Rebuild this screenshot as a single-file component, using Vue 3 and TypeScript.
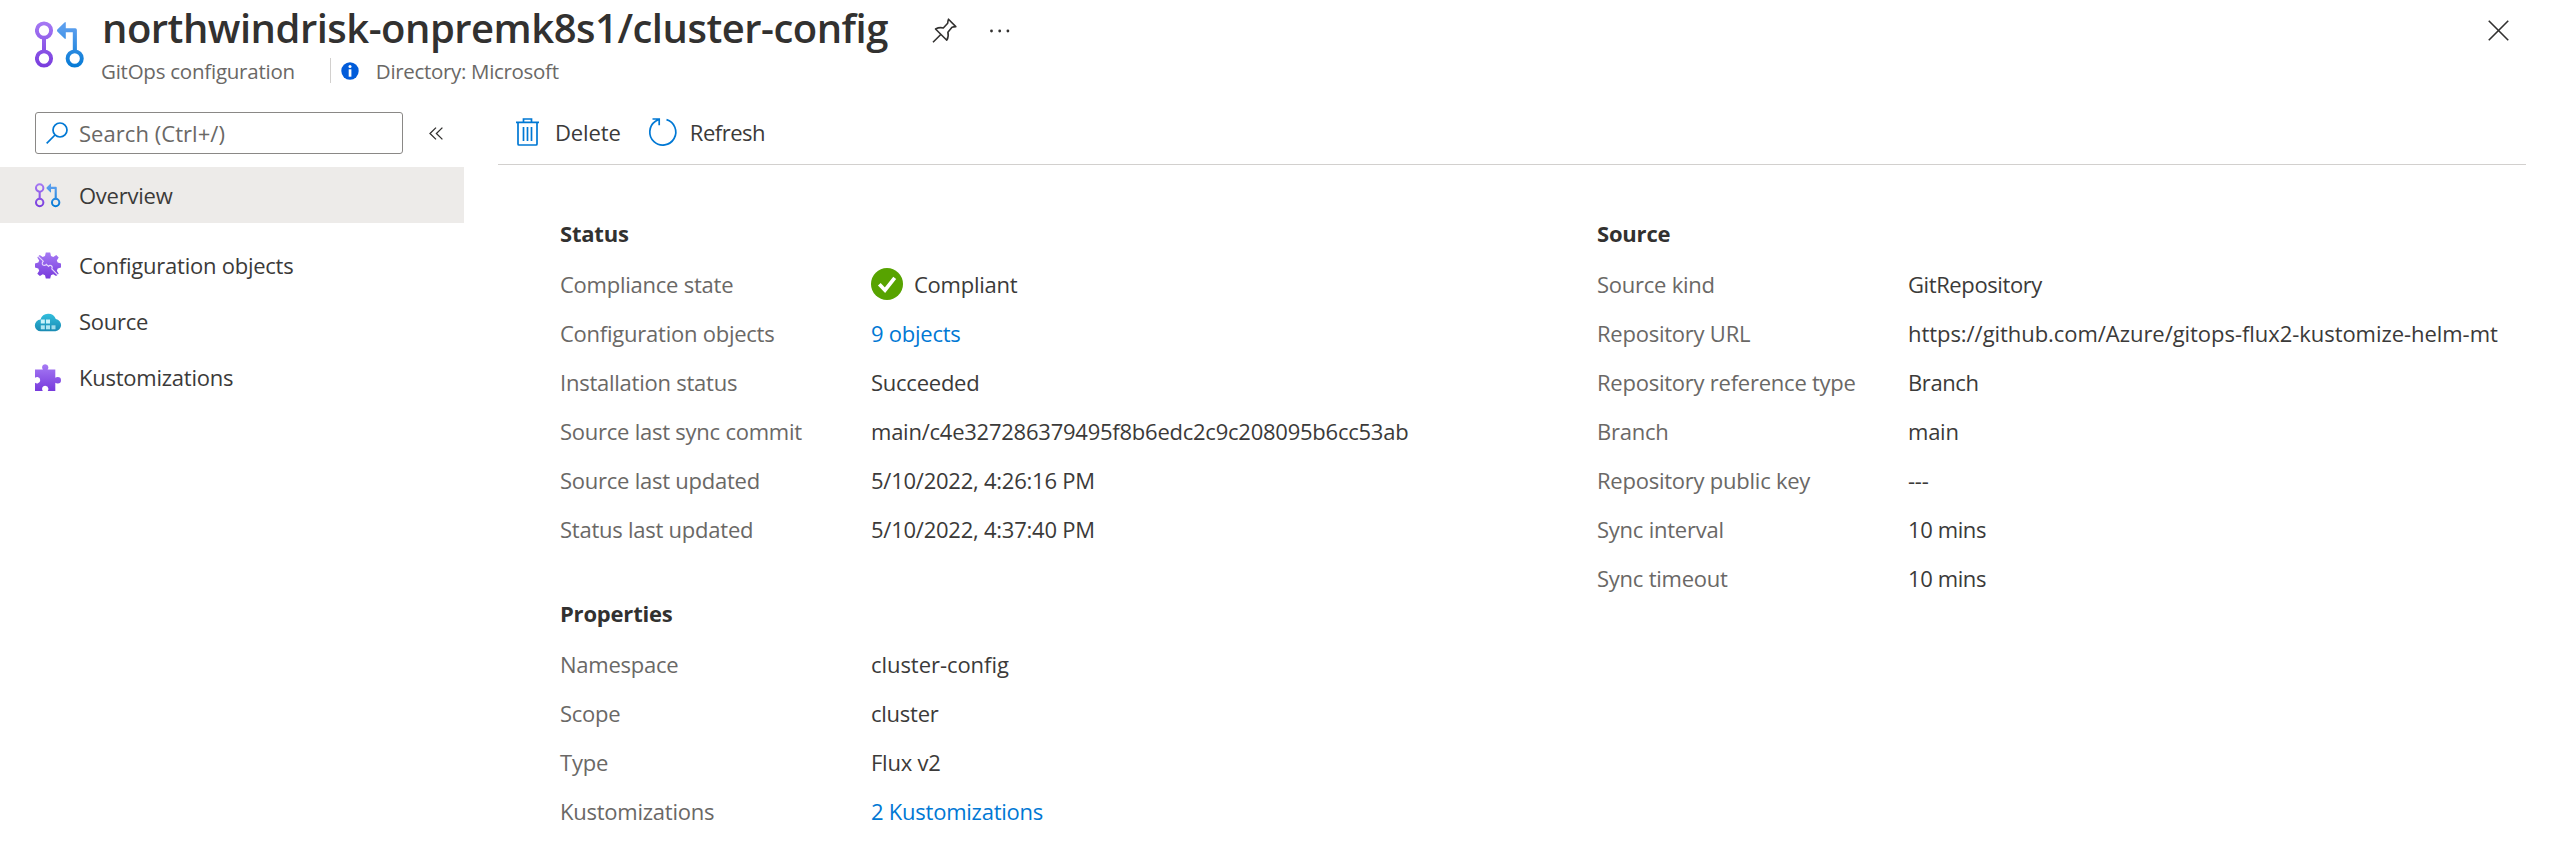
<script setup lang="ts">
interface Row {
  label: string
  value: string
  kind?: 'link' | 'ok'
  fit?: 'wide' | 'narrow'
}
interface Section {
  title: string
  rows: Row[]
}

const nav = [
  { id: 'overview', label: 'Overview' },
  { id: 'objects', label: 'Configuration objects' },
  { id: 'source', label: 'Source' },
  { id: 'kustomizations', label: 'Kustomizations' },
]

const columns: Section[][] = [
  [
    {
      title: 'Status',
      rows: [
        { label: 'Compliance state', value: 'Compliant', kind: 'ok' },
        { label: 'Configuration objects', value: '9 objects', kind: 'link' },
        { label: 'Installation status', value: 'Succeeded' },
        { label: 'Source last sync commit', value: 'main/c4e327286379495f8b6edc2c9c208095b6cc53ab' },
        { label: 'Source last updated', value: '5/10/2022, 4:26:16 PM' },
        { label: 'Status last updated', value: '5/10/2022, 4:37:40 PM' },
      ],
    },
    {
      title: 'Properties',
      rows: [
        { label: 'Namespace', value: 'cluster-config', fit: 'wide' },
        { label: 'Scope', value: 'cluster' },
        { label: 'Type', value: 'Flux v2' },
        { label: 'Kustomizations', value: '2 Kustomizations', kind: 'link' },
      ],
    },
  ],
  [
    {
      title: 'Source',
      rows: [
        { label: 'Source kind', value: 'GitRepository', fit: 'narrow' },
        { label: 'Repository URL', value: 'https://github.com/Azure/gitops-flux2-kustomize-helm-mt', fit: 'wide' },
        { label: 'Repository reference type', value: 'Branch', fit: 'narrow' },
        { label: 'Branch', value: 'main' },
        { label: 'Repository public key', value: '---' },
        { label: 'Sync interval', value: '10 mins', fit: 'narrow' },
        { label: 'Sync timeout', value: '10 mins', fit: 'narrow' },
      ],
    },
  ],
]
</script>

<template>
  <div class="page">
    <svg class="defs" width="0" height="0">
      <defs>
        <linearGradient id="purple" x1="0" y1="0" x2="0" y2="1">
          <stop offset="0" stop-color="#a67af4" />
          <stop offset="1" stop-color="#773adc" />
        </linearGradient>
        <linearGradient id="purpleStem" gradientUnits="userSpaceOnUse" x1="0" y1="0" x2="0" y2="48">
          <stop offset="0" stop-color="#a67af4" />
          <stop offset="1" stop-color="#773adc" />
        </linearGradient>
        <linearGradient id="blueStem" gradientUnits="userSpaceOnUse" x1="0" y1="0" x2="0" y2="48">
          <stop offset="0" stop-color="#5ea0ef" />
          <stop offset="0.2" stop-color="#559cec" />
          <stop offset="1" stop-color="#0078d4" />
        </linearGradient>
        <linearGradient id="teal" x1="0" y1="0" x2="0" y2="1">
          <stop offset="0" stop-color="#32bedd" />
          <stop offset="1" stop-color="#198ab3" />
        </linearGradient>
        <symbol id="branch" viewBox="0 0 50 48">
          <g fill="none" stroke="url(#purpleStem)" stroke-width="3.9">
            <circle cx="9" cy="9.5" r="7.1" />
            <circle cx="9" cy="37.5" r="7.1" />
          </g>
          <rect x="7" y="16" width="4" height="15.5" fill="url(#purpleStem)" />
          <circle cx="39.7" cy="37.5" r="7.1" fill="none" stroke="url(#blueStem)" stroke-width="3.9" />
          <path d="M37.8 31.500V11.300H30.800V17Q30.800 18.800 29.500 17.600L22.300 10.400Q21.600 9.500 22.300 8.600L29.500 1.400Q30.800.2 30.800 2V7.300H40.300Q41.900 7.300 41.900 8.900V31.500Z" fill="url(#blueStem)" />
        </symbol>
      </defs>
    </svg>

    <header class="head">
      <svg class="head-icon"><use href="#branch" /></svg>
      <div class="head-text">
        <div class="title-line">
          <h1>northwindrisk-onpremk8s1/cluster-config</h1>
          <svg class="pin" viewBox="0 0 25 25" fill="none" stroke="#323130" stroke-width="1.6" stroke-linejoin="round">
            <path d="M16.500 1.200L23.800 8.600Q21.500 9 20 9.200L15.900 14.200Q17 18.500 14.800 22.200L3.500 11Q7.500 9 11.300 10L15.700 5.300Q15.800 3 16.500 1.200Z M8.800 16.500L1 24.200" />
          </svg>
          <svg class="dots" viewBox="0 0 20 4" fill="#323130">
            <circle cx="1.500" cy="2" r="1.400" /><circle cx="9.700" cy="2" r="1.400" /><circle cx="17.900" cy="2" r="1.400" />
          </svg>
        </div>
        <div class="sub-line">
          <span>GitOps configuration</span>
          <i class="bar"></i>
          <svg class="info" viewBox="0 0 18 18">
            <circle cx="9" cy="9" r="8.700" fill="#015cda" />
            <circle cx="9" cy="4.600" r="1.500" fill="#fff" />
            <rect x="7.700" y="7.300" width="2.700" height="7.400" fill="#fff" />
          </svg>
          <span class="directory">Directory: Microsoft</span>
        </div>
      </div>
      <svg class="close" viewBox="0 0 22 22" stroke="#323130" stroke-width="1.700"><path d="M.8.8L21.200 21.200M21.200.8L.8 21.200" /></svg>
    </header>

    <div class="body">
      <aside>
        <div class="search-line">
          <div class="search">
            <svg viewBox="0 0 22 22" fill="none" stroke="#0078d4" stroke-width="1.700">
              <circle cx="14" cy="8" r="7" /><path d="M9 13L.7 21.300" />
            </svg>
            <span>Search (Ctrl+/)</span>
          </div>
          <svg class="collapse" viewBox="0 0 14 13" fill="none" stroke="#323130" stroke-width="1.300">
            <path d="M7 .6L1 6.500L7 12.400M13.400.6L7.400 6.500L13.400 12.400" />
          </svg>
        </div>
        <nav>
          <a v-for="item in nav" :key="item.id" :class="{ active: item.id === 'overview' }">
            <svg v-if="item.id === 'overview'" class="nav-icon"><use href="#branch" /></svg>
            <svg v-else-if="item.id === 'objects'" class="nav-icon" viewBox="0 0 26 26">
              <path fill="url(#purple)" d="M10.800 0H15.200L16 3.500L18.300 4.400L21.300 2.500L23.700 4.900L21.800 8L22.700 10.100L26 10.900V15.100L22.700 15.900L21.800 18.200L23.700 21.200L21.100 23.600L18.200 21.800L16 22.700L15.200 26H10.800L10 22.700L7.800 21.800L4.900 23.600L2.300 21.200L4.200 18.200L3.300 15.900L0 15.100V10.900L3.300 10.100L4.200 8L2.300 4.900L4.700 2.500L7.700 4.400L10 3.500Z" />
              <path fill="none" stroke="#e6d9fc" stroke-width="1.100" d="M3 3.500L8.300 8.700Q6.300 11.200 8 12.500Q9.700 13.500 11.300 11.800L13.500 13.900Q14.200 12.400 16 13Q18 14.200 16.800 16.500L22.800 22.500" />
            </svg>
            <svg v-else-if="item.id === 'source'" class="nav-icon" viewBox="0 0 26 26">
              <path fill="url(#teal)" d="M6 22.800A5.900 5.900 0 0 1 5.500 11A8.100 8.100 0 0 1 20.800 10.500A6.200 6.200 0 0 1 20.500 22.800Z" />
              <g fill="#c9f3fb">
                <rect x="5.800" y="11" width="4" height="4" /><rect x="11" y="11" width="4" height="4" />
                <rect x="5.800" y="16.800" width="4" height="4" opacity=".85" /><rect x="11" y="16.800" width="4" height="4" opacity=".85" /><rect x="16.500" y="16.800" width="4" height="4" opacity=".75" />
              </g>
            </svg>
            <svg v-else class="nav-icon" viewBox="0 0 26 27">
              <path fill="url(#purple)" d="M0 5.500H7.900Q6.900 4.300 7.100 3A3.200 3.200 0 0 1 13.400 3Q13.600 4.300 12.600 5.500H20.300V13.700Q21.500 12.900 22.800 13A3.200 3.200 0 0 1 22.800 19.400Q21.500 19.500 20.300 18.700V27H12.700Q13.600 25.800 13.400 24.500A3.200 3.200 0 0 0 7.100 24.500Q6.900 25.800 7.800 27H0V18.800Q1.300 19.600 2.600 19.400A3.200 3.200 0 0 0 2.600 13.100Q1.300 12.900 0 13.700Z" />
            </svg>
            <span>{{ item.label }}</span>
          </a>
        </nav>
      </aside>

      <main>
        <div class="toolbar">
          <svg class="trash" viewBox="0 0 23 28" fill="none" stroke="#0078d4" stroke-width="1.700">
            <path d="M0 4.300H23M7.500 4V1H15.500V4M2 4.500V26Q2 27 3 27H20Q21 27 21 26V4.500M7.500 9V23M11.500 9V23M15.500 9V23" />
          </svg>
          <span class="delete">Delete</span>
          <svg class="refresh" viewBox="0 0 28 28" fill="none" stroke="#0078d4" stroke-width="1.700">
            <path d="M17.500 1.600A13 13 0 1 1 6.500 3.300L10 1.200M3.500 1H10.200V7.300" />
          </svg>
          <span class="refresh-label">Refresh</span>
        </div>
        <div class="content">
          <div v-for="(column, c) in columns" :key="c" class="column">
            <section v-for="section in column" :key="section.title">
              <h2>{{ section.title }}</h2>
              <dl>
                <div v-for="row in section.rows" :key="row.label" class="row">
                  <dt>{{ row.label }}</dt>
                  <dd :class="[row.kind, row.fit]">
                    <svg v-if="row.kind === 'ok'" class="check" viewBox="0 0 32 32">
                      <circle cx="16" cy="16" r="16" fill="#57a300" />
                      <path d="M8.300 16.200L14 22.200L23.700 9.800" fill="none" stroke="#fff" stroke-width="3.700" />
                    </svg>
                    <span>{{ row.value }}</span>
                  </dd>
                </div>
              </dl>
            </section>
          </div>
        </div>
      </main>
    </div>
  </div>
</template>

<style>
body {
  margin: 0;
  background: #fff;
}
</style>

<style scoped>
.page {
  width: 2560px;
  height: 856px;
  overflow: hidden;
  box-sizing: border-box;
  font: 22px/49px "Open Sans", "Noto Sans", sans-serif;
  letter-spacing: -0.24px;
  color: #3b3a39;
  white-space: nowrap;
}
.defs {
  display: block;
}
svg {
  display: block;
  flex: none;
  overflow: visible;
}
.head {
  display: flex;
  height: 102px;
  padding: 0 51px 0 35px;
}
.head-icon {
  width: 50px;
  height: 48px;
  margin-top: 21px;
}
.head-text {
  margin-left: 16px;
  flex: 1;
}
.title-line {
  display: flex;
  height: 55px;
}
h1 {
  margin: 0 0 0 1px;
  font-size: 40px;
  line-height: 55px;
  font-weight: 600;
  letter-spacing: -0.5px;
  color: #323130;
}
.pin {
  width: 25px;
  height: 25px;
  margin: 18px 0 0 44px;
}
.dots {
  width: 20px;
  height: 4px;
  margin: 28.500px 0 0 33px;
}
.sub-line {
  display: flex;
  height: 32px;
  line-height: 32px;
  font-size: 20.500px;
  color: #6a6866;
}
.bar {
  width: 1px;
  height: 25px;
  margin: 3px 10px 0 35px;
  background: #d2d0ce;
}
.info {
  width: 18px;
  height: 18px;
  margin: 7px 17px 0 0;
}
.directory {
  letter-spacing: -0.32px;
}
.close {
  width: 21px;
  height: 21px;
  margin-top: 20px;
}
.body {
  display: flex;
}
aside {
  width: 464px;
  flex: none;
}
.search-line {
  display: flex;
  align-items: center;
  padding: 10px 0 13px 35px;
}
.search {
  display: flex;
  align-items: center;
  width: 368px;
  height: 42px;
  box-sizing: border-box;
  border: 1px solid #8a8886;
  border-radius: 3px;
  padding-left: 10px;
  color: #6a6866;
  letter-spacing: 0.05px;
}
.search svg {
  width: 22px;
  height: 22px;
  margin-right: 11px;
}
.collapse {
  width: 14px;
  height: 13px;
  margin-left: 26px;
}
nav a {
  display: flex;
  align-items: center;
  height: 56px;
  padding-left: 35px;
}
nav a.active {
  background: #edebe9;
  margin-bottom: 14px;
}
.nav-icon {
  width: 26px;
  height: 27px;
  margin-right: 18px;
}
main {
  flex: 1;
  margin-left: 34px;
}
.toolbar {
  display: flex;
  align-items: center;
  height: 60px;
  width: 2028px;
  box-sizing: content-box;
  padding-bottom: 2px;
  border-bottom: 1px solid #d2d0ce;
}
.trash {
  width: 23px;
  height: 28px;
  margin: 0 16px 0 18px;
}
.refresh {
  width: 28px;
  height: 28px;
  margin: 0 13px 0 28px;
}
.delete {
  letter-spacing: -0.1px;
}
.refresh-label {
  letter-spacing: -0.5px;
}
.content {
  display: grid;
  grid-template-columns: 1037px auto;
  padding: 42px 0 0 62px;
}
section + section {
  margin-top: 33px;
}
h2 {
  margin: 0;
  font-size: 22px;
  line-height: 53px;
  font-weight: 700;
  letter-spacing: -0.2px;
  color: #323130;
}
dl,
dd {
  margin: 0;
}
.row {
  display: grid;
  grid-template-columns: 311px auto;
  height: 49px;
}
dt {
  color: #6a6866;
}
dd {
  display: flex;
  align-items: center;
}
.link {
  color: #0078d4;
}
.wide {
  letter-spacing: -0.05px;
}
.narrow {
  letter-spacing: -0.4px;
}
.check {
  width: 32px;
  height: 32px;
  margin: -2px 11px 0 0;
}
</style>
